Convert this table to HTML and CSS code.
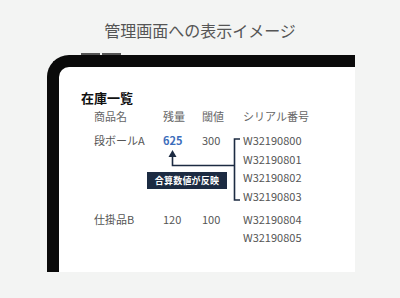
FILE: index.html
```html
<!DOCTYPE html>
<html lang="ja">
<head>
<meta charset="utf-8">
<link rel="stylesheet" href="styles.css">
</head>
<body>
<h1 class="title">管理画面への表示イメージ</h1>
<div class="device-wrap">
  <div class="buttons"><span class="btn"></span><span class="btn"></span></div>
  <div class="device">
    <h2 class="heading">在庫一覧</h2>
    <div class="table">
      <div class="row head">
        <div class="c name">商品名</div>
        <div class="c qty">残量</div>
        <div class="c th">閾値</div>
        <div class="c serial">シリアル番号</div>
      </div>
      <div class="row">
        <div class="c name">段ボールA</div>
        <div class="c qty hl">625</div>
        <div class="c th">300</div>
        <div class="c serial">
          <div>W32190800</div>
          <div>W32190801</div>
          <div>W32190802</div>
          <div>W32190803</div>
        </div>
      </div>
      <div class="row">
        <div class="c name">仕掛品B</div>
        <div class="c qty">120</div>
        <div class="c th">100</div>
        <div class="c serial">
          <div>W32190804</div>
          <div>W32190805</div>
        </div>
      </div>
    </div>
    <svg class="annot" width="308" height="217" viewBox="0 0 308 217">
      <path d="M181 72 H175.5 V133 H181" fill="none" stroke="#1c2b42" stroke-width="1.6"/>
      <path d="M175.5 98.5 H113.5 V89" fill="none" stroke="#1c2b42" stroke-width="1.6"/>
      <path d="M109.5 90 L113.5 83 L117.5 90 Z" fill="#1c2b42"/>
    </svg>
    <div class="label">合算数値が反映</div>
  </div>
</div>
</body>
</html>
```

FILE: styles.css
```css
html, body {
  margin: 0;
  padding: 0;
}
body {
  width: 400px;
  height: 298px;
  overflow: hidden;
  background: #f3f4f3;
  font-family: "Noto Sans CJK JP", "Noto Sans", sans-serif;
  color: #555;
}
.title {
  margin: 0;
  padding-top: 18px;
  height: 26px;
  line-height: 24px;
  font-size: 16px;
  font-weight: 400;
  text-align: center;
  color: #555;
}
.device-wrap {
  margin-left: 47px;
  padding-top: 9px;
}
.buttons {
  display: flex;
  gap: 2px;
  margin-left: 34px;
  height: 2px;
}
.btn {
  width: 19px;
  height: 2px;
  background: #555;
}
.device {
  position: relative;
  box-sizing: border-box;
  width: 308px;
  height: 217px;
  background: #fff;
  border-left: 12px solid #0a0a0a;
  border-top: 12px solid #0a0a0a;
  border-top-left-radius: 22px;
  padding: 21px 0 0 22px;
}
.heading {
  margin: 0;
  font-size: 13px;
  line-height: 19px;
  font-weight: 700;
  color: #111;
}
.table {
  display: flex;
  flex-direction: column;
  gap: 5px;
  padding-left: 13px;
  font-size: 11px;
  line-height: 18.4px;
}
.row {
  display: grid;
  grid-template-columns: 69px 39px 41px 1fr;
}
.row.head {
  color: #666;
  margin-bottom: 1px;
}
.hl {
  color: #3d6dbb;
  font-weight: 700;
}
.annot {
  position: absolute;
  left: 0;
  top: 0;
}
.label {
  position: absolute;
  left: 88px;
  top: 105px;
  width: 80px;
  height: 17px;
  background: #1c2b42;
  color: #fff;
  font-size: 9px;
  font-weight: 700;
  line-height: 17px;
  text-align: center;
  letter-spacing: 0.2px;
}
```
